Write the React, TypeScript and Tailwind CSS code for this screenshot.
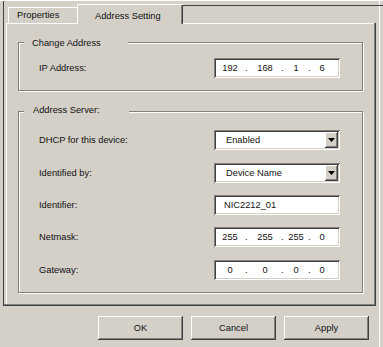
import React from "react";

const sunken =
  "bg-white shadow-[inset_1px_1px_0_#808080,inset_-1px_-1px_0_#fff,inset_2px_2px_0_#404040,inset_-2px_-2px_0_#d4d0c8]";
const raised =
  "bg-[#d4d0c8] shadow-[inset_-1px_-1px_0_#404040,inset_1px_1px_0_#fff,inset_-2px_-2px_0_#808080]";

function IpField({ parts }: { parts: string[] }) {
  return (
    <div className={`h-[20px] w-[126px] flex items-center pl-[2px] ${sunken}`}>
      <span className="w-[28px] text-center">{parts[0]}</span>
      <span className="w-[6px] pl-px">.</span>
      <span className="w-[30px] text-center">{parts[1]}</span>
      <span className="w-[6px] pl-px">.</span>
      <span className="w-[20px] text-center">{parts[2]}</span>
      <span className="w-[7px] pl-[2px]">.</span>
      <span className="w-[18px] text-center">{parts[3]}</span>
    </div>
  );
}

function Select({ value }: { value: string }) {
  return (
    <div className={`h-[20px] w-[126px] flex items-stretch p-[2px] ${sunken}`}>
      <span className="flex-1 pl-[10px] flex items-center">{value}</span>
      <div className={`w-[13px] flex items-center justify-center ${raised}`}>
        <svg width="7" height="4" viewBox="0 0 7 4">
          <path d="M0 0H7L3.5 4Z" fill="#000" />
        </svg>
      </div>
    </div>
  );
}

function TextField({ value }: { value: string }) {
  return (
    <div className={`h-[20px] w-[126px] flex items-center pl-[10px] ${sunken}`}>
      {value}
    </div>
  );
}

function Row({ label, children, className = "" }: { label: string; children: React.ReactNode; className?: string }) {
  return (
    <div className={`flex items-center ${className}`}>
      <span className="w-[195px] pl-[20px]">{label}</span>
      {children}
    </div>
  );
}

function Button({ label }: { label: string }) {
  return (
    <div className={`w-[85px] h-[24px] flex items-center justify-center ${raised}`}>
      {label}
    </div>
  );
}

export default function App() {
  return (
    <div className="w-[383px] h-[347px] pt-px bg-[#d4d0c8] overflow-hidden font-['Liberation_Sans',Arial,sans-serif] text-[9.3px] leading-[12px] text-[#111] shadow-[inset_0_1px_0_#fff,inset_-3px_0_0_#d4d0c8,inset_-4px_0_0_#fff]">
      {/* tab strip */}
      <div className="ml-[3px] h-[22px] flex items-end shadow-[inset_1px_0_0_#404040]">
        <div className="ml-[5px] w-[69px] h-[16px] pl-[9px] pt-[2px] shadow-[inset_1px_1px_0_#fff]">
          Properties
        </div>
        <div className="relative z-10 -mb-px w-[106px] h-[20px] pl-[18px] pt-[6px] bg-[#d4d0c8] shadow-[inset_1px_1px_0_#fff,inset_-1px_0_0_#404040,inset_-2px_0_0_#808080]">
          Address Setting
        </div>
        <div className="flex-1 self-start mt-[4px] h-px bg-[#404040]" />
      </div>
      {/* panel */}
      <div className="ml-[3px] w-[373px] h-[283px] pl-[15px] pt-[19px] shadow-[inset_1px_0_0_#404040,inset_0_-1px_0_#404040,inset_-1px_0_0_#404040,inset_0_-2px_0_#808080,inset_-2px_0_0_#808080,inset_3px_0_0_#d4d0c8,inset_4px_0_0_#fff,inset_0_1px_0_#fff]">
        <div className="relative w-[345px] h-[49px] pt-[15px] border border-[#808080] shadow-[inset_1px_1px_0_#fff,1px_1px_0_#fff]">
          <span className="absolute left-[5px] top-[-6px] w-[104px] pl-[8px] bg-[#d4d0c8]">
            Change Address
          </span>
          <Row label="IP Address:">
            <IpField parts={["192", "168", "1", "6"]} />
          </Row>
        </div>
        <div className="relative mt-[20px] w-[345px] h-[182px] pt-[18px] border border-[#808080] shadow-[inset_1px_1px_0_#fff,1px_1px_0_#fff]">
          <span className="absolute left-[5px] top-[-8px] w-[105px] pl-[9px] bg-[#d4d0c8]">
            Address Server:
          </span>
          <Row label="DHCP for this device:">
            <Select value="Enabled" />
          </Row>
          <Row label="Identified by:" className="mt-[13px]">
            <Select value="Device Name" />
          </Row>
          <Row label="Identifier:" className="mt-[12px]">
            <TextField value="NIC2212_01" />
          </Row>
          <Row label="Netmask:" className="mt-[12px]">
            <IpField parts={["255", "255", "255", "0"]} />
          </Row>
          <Row label="Gateway:" className="mt-[13px]">
            <IpField parts={["0", "0", "0", "0"]} />
          </Row>
        </div>
      </div>
      <div className="mt-[10px] flex justify-end gap-[8px] pr-[14px]">
        <Button label="OK" />
        <Button label="Cancel" />
        <Button label="Apply" />
      </div>
    </div>
  );
}
